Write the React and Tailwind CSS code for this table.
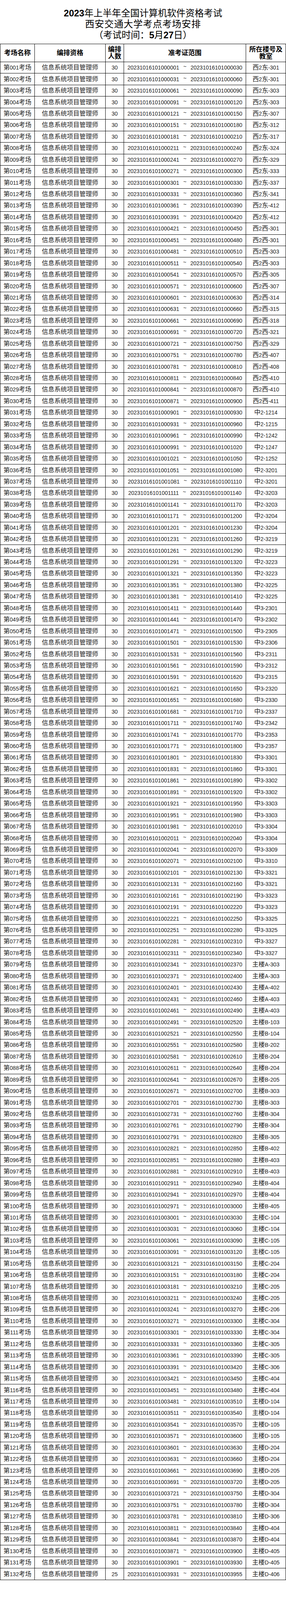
const rooms = [
  '西2东-301', '西2东-301', '西2东-303', '西2东-303', '西2东-307', '西2东-312', '西2东-317', '西2东-324',
  '西2东-329', '西2东-333', '西2东-337', '西2东-341', '西2东-412', '西2东-412', '西2西-301', '西2西-301',
  '西2西-303', '西2西-303', '西2西-305', '西2西-307', '西2西-314', '西2西-315', '西2西-318', '西2西-321',
  '西2西-329', '西2西-407', '西2西-408', '西2西-410', '西2西-410', '西2西-411', '中2-1214', '中2-1215',
  '中2-1242', '中2-1247', '中2-1252', '中2-3201', '中2-3201', '中2-3203', '中2-3203', '中2-3204',
  '中2-3204', '中2-3219', '中2-3219', '中2-3223', '中2-3223', '中2-3225', '中2-3225', '中3-2301',
  '中3-2302', '中3-2305', '中3-2306', '中3-2311', '中3-2312', '中3-2315', '中3-2320', '中3-2330',
  '中3-2337', '中3-2342', '中3-2353', '中3-2357', '中3-3301', '中3-3301', '中3-3302', '中3-3302',
  '中3-3303', '中3-3303', '中3-3304', '中3-3304', '中3-3309', '中3-3310', '中3-3321', '中3-3321',
  '中3-3323', '中3-3323', '中3-3325', '中3-3325', '中3-3327', '中3-3327', '主楼A-303', '主楼A-303',
  '主楼A-402', '主楼A-403', '主楼A-403', '主楼B-103', '主楼B-104', '主楼B-202', '主楼B-204', '主楼B-204',
  '主楼B-205', '主楼B-303', '主楼B-303', '主楼B-304', '主楼B-304', '主楼B-305', '主楼B-402', '主楼B-403',
  '主楼B-403', '主楼B-404', '主楼B-404', '主楼B-405', '主楼C-104', '主楼C-104', '主楼C-105', '主楼C-105',
  '主楼C-204', '主楼C-204', '主楼C-205', '主楼C-205', '主楼C-206', '主楼C-304', '主楼C-304', '主楼C-305',
  '主楼C-305', '主楼C-306', '主楼C-404', '主楼C-404', '主楼D-104', '主楼D-104', '主楼D-105', '主楼D-105',
  '主楼D-204', '主楼D-204', '主楼D-205', '主楼D-205', '主楼D-304', '主楼D-304', '主楼D-306', '主楼D-404',
  '主楼D-404', '主楼D-405', '主楼D-405', '主楼D-406',
];

const ticket = (n) => '2023101610100' + String(n).padStart(4, '0');

const rows = rooms.map((room, i) => {
  const count = i === rooms.length - 1 ? 25 : 30;
  const start = i * 30 + 1;
  return {
    name: '第' + String(i + 1).padStart(3, '0') + '考场',
    count,
    from: ticket(start),
    to: ticket(start + count - 1),
    room,
  };
});

// latin runs are set smaller so the digits come out narrow like the original
function Mixed({ text }) {
  return text.split(/([\x00-\x7f]+)/).map((part, i) =>
    /^[\x00-\x7f]+$/.test(part) ? (
      <span key={i} className="text-[14px]">
        {part}
      </span>
    ) : (
      part
    ),
  );
}

const grid = 'grid grid-cols-[88px_181px_47px_312px_102px] overflow-hidden';
const cell =
  'flex h-full min-h-0 items-center justify-center overflow-hidden border-r border-b border-black text-center whitespace-nowrap';

export default function App() {
  return (
    <div className="w-[731px] bg-white font-['Liberation_Sans','Noto_Sans_CJK_SC',sans-serif] text-[#1c1c1c]">
      <div className="flex h-[112px] flex-col overflow-hidden pt-[20px] text-center leading-[28px] text-black">
        <div className="text-[23.5px]">
          <span className="font-bold">2023</span>年上半年全国计算机软件资格考试
        </div>
        <div className="text-[24px] tracking-[0.7px]">西安交通大学考点考场安排</div>
        <div className="text-[23.5px]">
          （考试时间：<span className="font-bold">5</span>月<span className="font-bold">27</span>日）
        </div>
      </div>

      <div className="border-t border-l border-black">
        <div className={`${grid} h-[46px] grid-rows-[46px] text-[17px] leading-[18px] font-bold text-black`}>
          <div className={cell}>考场名称</div>
          <div className={cell}>编排资格</div>
          <div className={`${cell} flex-col`}>
            <span>编排</span>
            <span>人数</span>
          </div>
          <div className={cell}>准考证范围</div>
          <div className={`${cell} flex-col`}>
            <span>所在楼号及</span>
            <span>教室</span>
          </div>
        </div>

        {rows.map((r) => (
          <div key={r.name} className={`${grid} h-[29.45px] grid-rows-[29.45px] text-[16px] leading-[20px]`}>
            <div className={cell}>
              <span>
                <Mixed text={r.name} />
              </span>
            </div>
            <div className={cell}>信息系统项目管理师</div>
            <div className={cell}>
              <span className="text-[14px]">{r.count}</span>
            </div>
            <div className={cell}>
              <span className="text-[14px]">
                {r.from}
                <span className="inline-block w-[29px] -translate-y-[3px] text-center">~</span>
                {r.to}
              </span>
            </div>
            <div className={cell}>
              <span>
                <Mixed text={r.room} />
              </span>
            </div>
          </div>
        ))}
      </div>
    </div>
  );
}
